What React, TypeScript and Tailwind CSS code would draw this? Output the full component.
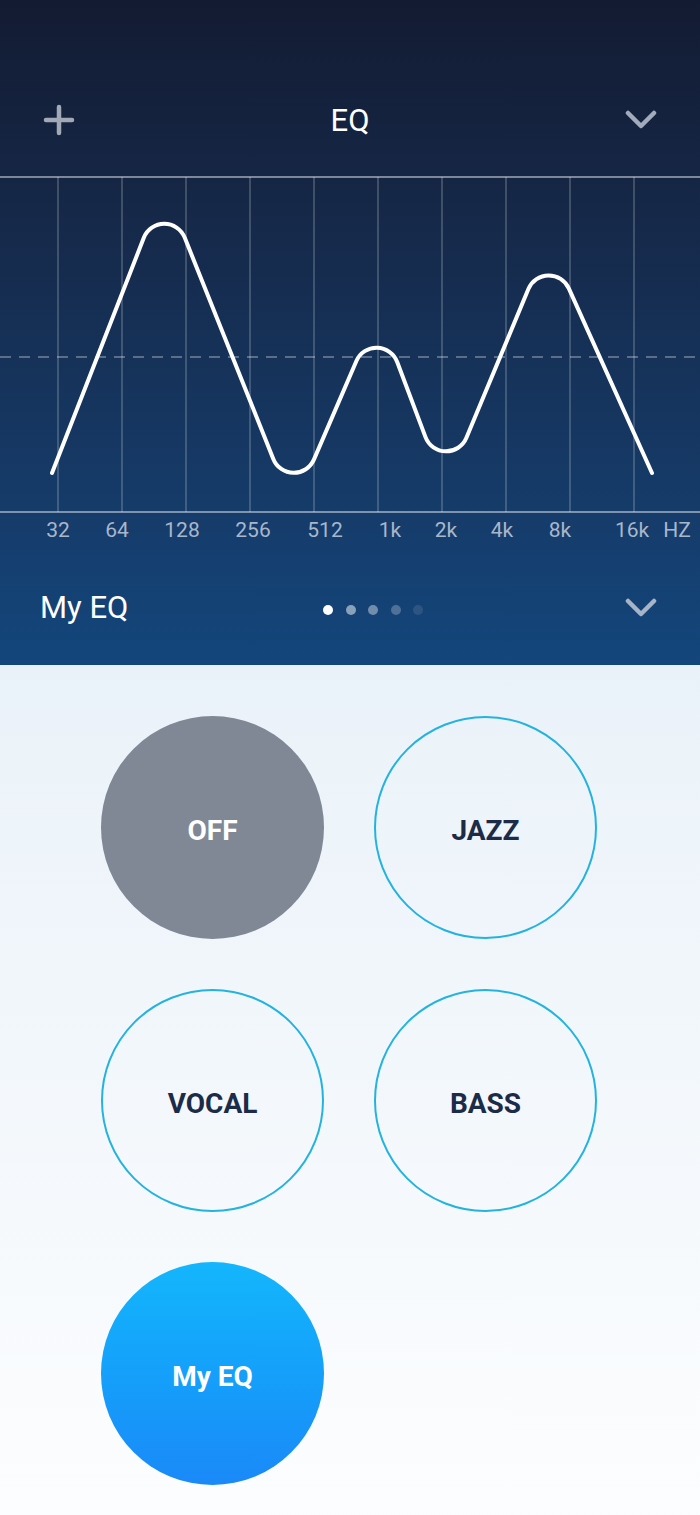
import React from 'react';

type Pt = [number, number];

// sharp polyline of the curve; corners get rounded with arcs
const curvePts: Pt[] = [
  [52, 303],
  [164, 16],
  [293, 338],
  [378, 141],
  [445, 319],
  [548, 72],
  [652, 303],
];

const roundedPath = (pts: Pt[], r: number) => {
  let d = `M ${pts[0][0]} ${pts[0][1]}`;
  for (let i = 1; i < pts.length - 1; i++) {
    const [ax, ay] = pts[i - 1];
    const [vx, vy] = pts[i];
    const [bx, by] = pts[i + 1];
    const l1 = Math.hypot(ax - vx, ay - vy);
    const l2 = Math.hypot(bx - vx, by - vy);
    const u1 = [(ax - vx) / l1, (ay - vy) / l1];
    const u2 = [(bx - vx) / l2, (by - vy) / l2];
    const theta = Math.acos(u1[0] * u2[0] + u1[1] * u2[1]);
    const t = r / Math.tan(theta / 2);
    const t1 = [vx + u1[0] * t, vy + u1[1] * t];
    const t2 = [vx + u2[0] * t, vy + u2[1] * t];
    const cross = (vx - ax) * (by - vy) - (vy - ay) * (bx - vx);
    const sweep = cross > 0 ? 1 : 0;
    d += ` L ${t1[0].toFixed(1)} ${t1[1].toFixed(1)} A ${r} ${r} 0 0 ${sweep} ${t2[0].toFixed(1)} ${t2[1].toFixed(1)}`;
  }
  const last = pts[pts.length - 1];
  d += ` L ${last[0]} ${last[1]}`;
  return d;
};

const labels: [string, number][] = [
  ['32', 58],
  ['64', 117],
  ['128', 182],
  ['256', 253],
  ['512', 325],
  ['1k', 390],
  ['2k', 446],
  ['4k', 502],
  ['8k', 560],
  ['16k', 632],
  ['HZ', 677],
];

const Chevron = ({ color }: { color: string }) => (
  <svg width="32" height="20" viewBox="0 0 32 20" fill="none">
    <polyline points="3,3 16,16 29,3" stroke={color} strokeWidth="4.5" strokeLinecap="round" strokeLinejoin="round" />
  </svg>
);

const EqChart = () => (
  <svg width="700" height="380" viewBox="0 0 700 380" className="block">
    {Array.from({ length: 10 }).map((_, i) => (
      <line key={i} x1={58 + 64 * i} y1={7} x2={58 + 64 * i} y2={342} stroke="#ffffff" strokeOpacity="0.25" strokeWidth="1.5" />
    ))}
    <line x1={0} y1={7} x2={700} y2={7} stroke="#ffffff" strokeOpacity="0.45" strokeWidth="2" />
    <line x1={0} y1={342} x2={700} y2={342} stroke="#ffffff" strokeOpacity="0.45" strokeWidth="2" />
    <line x1={0} y1={187} x2={700} y2={187} stroke="#ffffff" strokeOpacity="0.4" strokeWidth="1.5" strokeDasharray="11 8" />
    <path d={roundedPath(curvePts, 22)} fill="none" stroke="#ffffff" strokeWidth="4" strokeLinecap="round" />
    {labels.map(([t, x]) => (
      <text key={t} x={x} y={360} textAnchor="middle" dominantBaseline="central" fontFamily="Roboto, sans-serif" fontSize="21" fill="#a9b7cb">
        {t}
      </text>
    ))}
  </svg>
);

const presets = [
  { name: 'OFF', cls: 'bg-[#808896] text-white' },
  { name: 'JAZZ', cls: 'border-2 border-[#23b3de] text-[#1b2b48]' },
  { name: 'VOCAL', cls: 'border-2 border-[#23b3de] text-[#1b2b48]' },
  { name: 'BASS', cls: 'border-2 border-[#23b3de] text-[#1b2b48]' },
  { name: 'My EQ', cls: 'bg-linear-to-b from-[#14b6fc] to-[#1a89f8] text-white' },
];

export default function App() {
  return (
    <div className="w-[700px] min-h-[1515px] flex flex-col font-['Roboto',sans-serif]">
      <div className="h-[665px] bg-linear-to-b from-[#131b32] to-[#13467c] flex flex-col">
        <div className="h-[170px] pt-[70px] px-[43px] flex items-center justify-between">
          <svg width="32" height="32" viewBox="0 0 32 32" fill="none">
            <path d="M16 3v26M3 16h26" stroke="#a2a9b6" strokeWidth="4.5" strokeLinecap="round" />
          </svg>
          <span className="text-[31px] text-white leading-none">EQ</span>
          <Chevron color="#a1abbc" />
        </div>
        <EqChart />
        <div className="flex-1 flex items-center pl-[40px] pr-[43px]">
          <span className="text-[31px] text-white leading-none">My EQ</span>
          <div className="ml-[195px] mt-[4px] flex items-center gap-[12.5px]">
            <span className="w-[10px] h-[10px] rounded-full bg-white" />
            <span className="w-[10px] h-[10px] rounded-full bg-white/50" />
            <span className="w-[10px] h-[10px] rounded-full bg-white/40" />
            <span className="w-[10px] h-[10px] rounded-full bg-white/25" />
            <span className="w-[10px] h-[10px] rounded-full bg-white/10" />
          </div>
          <div className="ml-auto">
            <Chevron color="#a6b4c7" />
          </div>
        </div>
      </div>
      <div className="flex-1 bg-linear-to-b from-[#eaf2f9] to-[#fcfdfe] pl-[101px] pt-[51px] pb-[32px]">
        <div className="grid grid-cols-[223px_223px] gap-[50px]">
          {presets.map((p) => (
            <button
              key={p.name}
              className={`w-[223px] h-[223px] rounded-full flex items-center justify-center pt-[6px] text-[28px] font-bold ${p.cls}`}>
              {p.name}
            </button>
          ))}
        </div>
      </div>
    </div>
  );
}
